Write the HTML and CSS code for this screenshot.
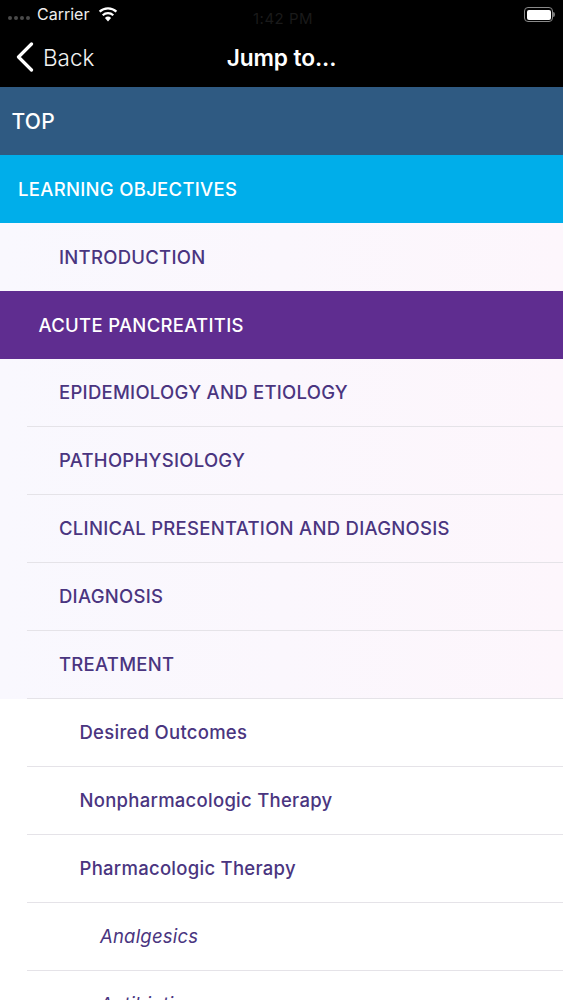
FILE: index.html
```html
<!DOCTYPE html>
<html lang="en">
<head>
<meta charset="utf-8">
<title>Jump to...</title>
<link rel="stylesheet" href="styles.css">
</head>
<body>
<div class="screen">
  <header class="top">
    <div class="status">
      <div class="status-left">
        <span class="dots"><i></i><i></i><i></i><i></i></span>
        <span class="carrier">Carrier</span>
        <svg class="wifi" width="20" height="16" viewBox="0 0 20 16"><path d="M10 15.5 L6.9 11.9 A4.6 4.6 0 0 1 13.1 11.9 Z" fill="#fff"/><path d="M4.7 9.2 A7.9 7.9 0 0 1 15.3 9.2" fill="none" stroke="#fff" stroke-width="2.2"/><path d="M1.6 5.6 A12.4 12.4 0 0 1 18.4 5.6" fill="none" stroke="#fff" stroke-width="2.2"/></svg>
      </div>
      <span class="clock">1:42 PM</span>
      <div class="status-right">
        <span class="battery"><span class="battery-fill"></span></span>
        <span class="nub"></span>
      </div>
    </div>
    <nav class="nav">
      <div class="back">
        <svg class="chev" width="18" height="30" viewBox="0 0 18 30"><path d="M15.5 2 L2.5 15 L15.5 28" fill="none" stroke="#fff" stroke-width="3.2" stroke-linecap="round" stroke-linejoin="round"/></svg>
        <span>Back</span>
      </div>
      <div class="title">Jump to...</div>
    </nav>
  </header>
  <main class="list">
    <div class="row solid top-row"><span>TOP</span></div>
    <div class="row solid lo l1"><span>LEARNING OBJECTIVES</span></div>
    <div class="row tint l3 intro"><span>INTRODUCTION</span></div>
    <div class="row solid acute l2"><span>ACUTE PANCREATITIS</span></div>
    <div class="row tint l3 line"><span>EPIDEMIOLOGY AND ETIOLOGY</span></div>
    <div class="row tint l3 line"><span>PATHOPHYSIOLOGY</span></div>
    <div class="row tint l3 line"><span>CLINICAL PRESENTATION AND DIAGNOSIS</span></div>
    <div class="row tint l3 line"><span>DIAGNOSIS</span></div>
    <div class="row tint l3 line"><span>TREATMENT</span></div>
    <div class="row l4 line"><span>Desired Outcomes</span></div>
    <div class="row l4 line"><span>Nonpharmacologic Therapy</span></div>
    <div class="row l4 line"><span>Pharmacologic Therapy</span></div>
    <div class="row l5 line"><span>Analgesics</span></div>
    <div class="row l5"><span>Antibiotics</span></div>
  </main>
</div>
</body>
</html>
```
FILE: styles.css
```css
html, body { margin: 0; padding: 0; background: #fff; }
.screen { width: 563px; height: 1000px; overflow: hidden; font-family: Inter, "Liberation Sans", sans-serif; }
.top { height: 87px; background: #000; color: #fff; }
.status { height: 28px; display: flex; justify-content: space-between; align-items: center; position: relative; }
.status-left { display: flex; align-items: center; padding-left: 8px; }
.dots { display: flex; gap: 2px; margin-top: 7px; }
.dots i { width: 4px; height: 4px; border-radius: 50%; background: #4a4a4a; }
.carrier { font-size: 16px; color: #eee; margin-left: 7px; }
.wifi { margin-left: 9px; margin-top: -1px; }
.clock { position: absolute; left: 253px; top: 9px; font-size: 15px; color: #1a1a1a; letter-spacing: .5px; }
.status-right { padding-right: 8px; display: flex; align-items: center; margin-top: 1px; }
.battery { display: block; width: 24px; height: 10px; border: 1.5px solid #8a8a8a; border-radius: 4px; padding: 1.5px; }
.battery-fill { display: block; width: 100%; height: 100%; background: #fff; border-radius: 2px; }
.nub { width: 2px; height: 5px; background: #777; border-radius: 0 2px 2px 0; }
.nav { height: 59px; position: relative; display: flex; align-items: center; justify-content: center; }
.back { position: absolute; left: 16px; top: 14px; display: flex; align-items: center; gap: 9px; font-size: 22.5px; font-weight: 300; color: #f2f2f2; height: 30px; }
.title { font-size: 22.7px; font-weight: 600; letter-spacing: -.1px; }
.list { display: flex; flex-direction: column; }
.row { height: 68px; flex: none; display: flex; align-items: center; box-sizing: border-box; position: relative; padding-bottom: 2px; font-size: 18.5px; font-weight: 550; letter-spacing: .27px; color: #4a3580; }
.solid { color: #fff; font-weight: 500; letter-spacing: .3px; padding-bottom: 0; }
.intro { padding-bottom: 0; }
.top-row { background: #2f5a82; padding-left: 11.5px; font-size: 21px; }
.lo { background: #00aeea; }
.acute { background: #5f2d90; }
.l1 { padding-left: 18px; }
.l2 { padding-left: 38.5px; }
.l3 { padding-left: 59px; }
.l4 { padding-left: 79.5px; }
.l5 { padding-left: 100px; font-weight: 400; font-style: italic; letter-spacing: .2px; }
.tint { background: linear-gradient(90deg, #f9f8fe, #fdf6fc); }
.line::after { content: ""; position: absolute; left: 27px; right: 0; bottom: 0; height: 1px; background: #e5e3e8; }
```
